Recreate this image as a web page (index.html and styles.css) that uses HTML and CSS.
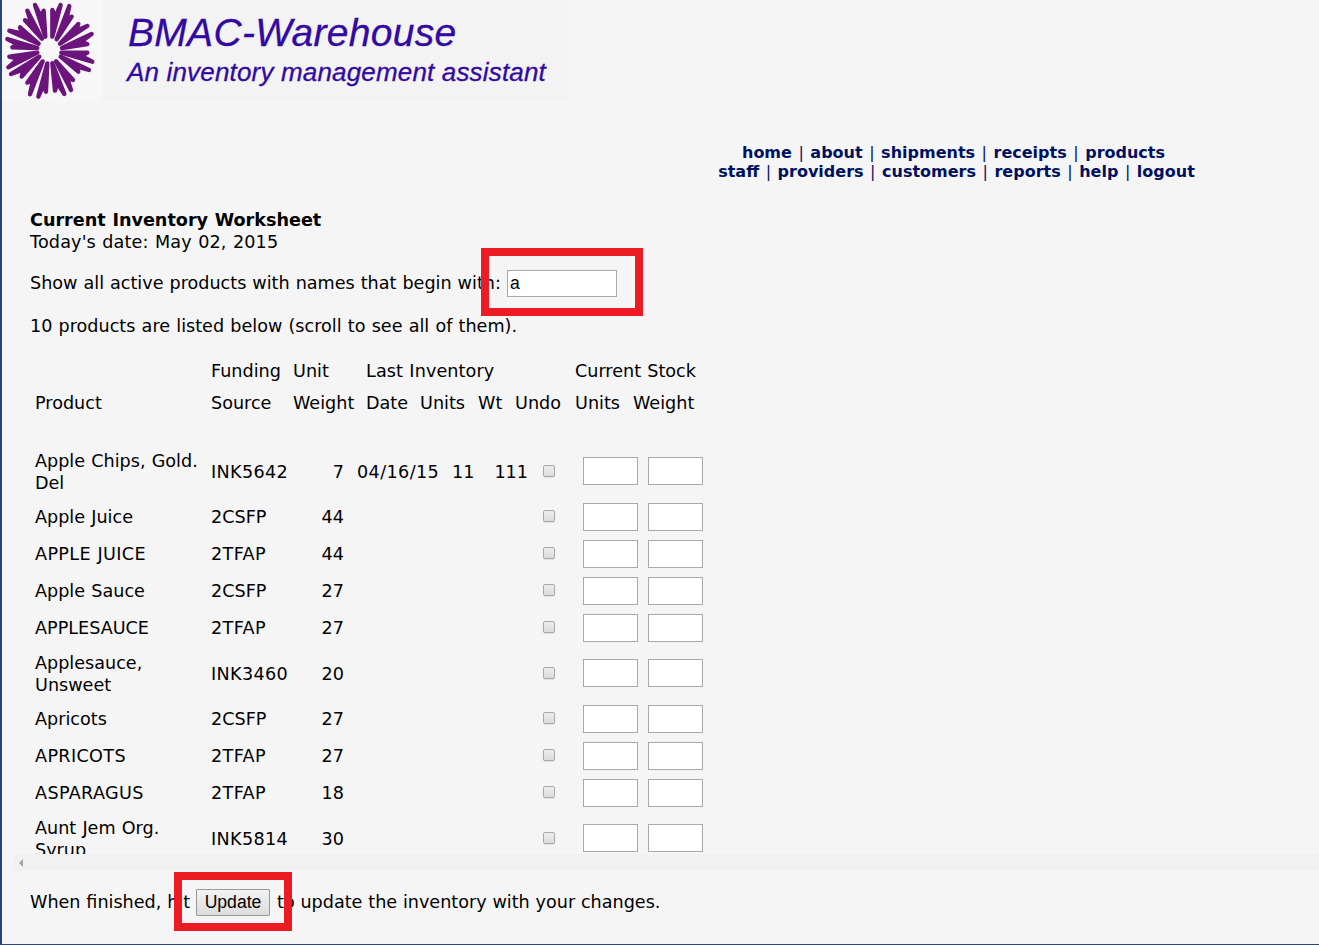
FILE: index.html
```
<!DOCTYPE html>
<html lang="en"><head><meta charset="utf-8"><title>BMAC-Warehouse</title><link rel="stylesheet" href="styles.css"></head>
<body>
<main class="page">
<header class="banner">
<svg class="logo" width="100" height="101" viewBox="0 0 300 303"><rect width="300" height="303" fill="#f7f7f7"/><g id="spokes" fill="#6b147b" stroke="#6b147b" stroke-width="13" stroke-linejoin="round">
</g></svg>
<div class="brand"><h1 class="brand-name">BMAC-Warehouse</h1><p class="tagline">An inventory management assistant</p></div>
</header>
<nav class="nav"><div class="nav-row nav-top"><a>home</a> | <a>about</a> | <a>shipments</a> | <a>receipts</a> | <a>products</a></div><div class="nav-row nav-bottom"><a>staff</a> | <a>providers</a> | <a>customers</a> | <a>reports</a> | <a>help</a> | <a>logout</a></div></nav>
<section class="intro"><h2 class="title">Current Inventory Worksheet</h2><p class="date">Today's date: May 02, 2015</p>
<div class="filter"><label class="filter-label" for="prefix">Show all active products with names that begin with:</label><span class="marked"><input id="prefix" class="prefix" value="a"><span class="mark mark-filter"></span></span></div>
<p class="count">10 products are listed below (scroll to see all of them).</p></section>
<div class="sheet">
<div class="head"><span></span><span>Funding</span><span>Unit</span><span class="last">Last Inventory</span><span class="stock">Current Stock</span></div>
<div class="head"><span>Product</span><span>Source</span><span>Weight</span><span>Date</span><span>Units</span><span>Wt</span><span>Undo</span><span>Units</span><span>Weight</span></div>
<div class="rows" id="rows"></div>
</div>
<div class="scrollbar"><span class="arrow"></span></div>
<footer class="finish"><span class="finish-a">When finished, hit</span><span class="marked"><button class="update">Update</button><span class="mark mark-update"></span></span><span class="finish-b">to update the inventory with your changes.</span></footer>
</main>
<script src="app.js"></script>
</body></html>
```

FILE: app.js
```
const products = [
  ["Apple Chips, Gold. Del", "INK5642", "7", "04/16/15", "11", "111"],
  ["Apple Juice", "2CSFP", "44"], ["APPLE JUICE", "2TFAP", "44"],
  ["Apple Sauce", "2CSFP", "27"], ["APPLESAUCE", "2TFAP", "27"],
  ["Applesauce, Unsweet", "INK3460", "20"], ["Apricots", "2CSFP", "27"],
  ["APRICOTS", "2TFAP", "27"], ["ASPARAGUS", "2TFAP", "18"],
  ["Aunt Jem Org. Syrup", "INK5814", "30"]
];
const twoLine = new Set([0, 5, 9]);
const spaced = new Set(["APPLE JUICE", "APRICOTS", "ASPARAGUS"]);
document.getElementById("rows").innerHTML = products.map((p, i) =>
  `<div class="row${twoLine.has(i) ? " tall" : ""}"><span class="name${spaced.has(p[0]) ? " caps" : ""}">${p[0]}</span><span class="${p[1] === "2CSFP" ? "" : "code"}">${p[1]}</span><span class="num">${p[2]}</span><span class="day">${p[3] || ""}</span><span>${p[4] || ""}</span><span class="num">${p[5] || ""}</span><input type="checkbox" class="undo"><input class="qty"><input class="qty"></div>`).join("");

// Each wedge: two outer tips and the inner point they share
const wedges = [
  [[131,32],[105,15],[136,110]], [[82,32],[75,61],[126,116]],
  [[60,82],[28,92],[116,131]], [[22,117],[37,142],[112,144]],
  [[28,170],[25,202],[112,158]], [[33,222],[65,230],[118,170]],
  [[82,248],[90,283],[128,184]], [[115,290],[138,275],[142,190]],
  [[165,272],[193,282],[157,190]], [[213,270],[219,240],[168,184]],
  [[235,215],[267,210],[182,170]], [[277,185],[262,158],[184,158]],
  [[262,132],[275,102],[186,144]], [[262,78],[235,72],[180,131]],
  [[215,50],[208,18],[170,118]], [[182,15],[157,30],[157,110]]
];
document.getElementById("spokes").innerHTML = wedges.map(([a, b, c]) => {
  const notch = [0, 1].map(k => (a[k] + b[k]) / 2 * 0.68 + c[k] * 0.32);
  return `<path d="M${[a, notch, b, c].map(([x, y]) => `${x - 6} ${y}`).join("L")}Z"/>`;
}).join("");
```

FILE: styles.css
```
* { box-sizing: border-box; }
body { margin: 0; background: #f5f5f5; color: #000; font: 17.6px/22px "DejaVu Sans", Verdana, sans-serif; word-spacing: .6px; }
h1, h2, p { margin: 0; }
.page { height: 945px; overflow: hidden; border-left: 2px solid #27457c; border-bottom: 1px solid #27457c; display: flex; flex-direction: column; }
.banner { display: flex; height: 101px; width: 566px; background: #f3f3f3; flex: none; }
.logo { flex: none; }
.brand { padding: 10px 0 0 25px; color: #3209a2; font-family: "Liberation Sans", Arial, sans-serif; font-style: italic; white-space: nowrap; word-spacing: 0; -webkit-text-stroke: .3px #3209a2; }
.brand-name { font-size: 39px; line-height: 45px; font-weight: 400; letter-spacing: .3px; padding-left: 1px; }
.tagline { font-size: 26px; line-height: 34px; letter-spacing: .17px; }
.nav { margin: 42px 0 0 590px; width: 730px; height: 38px; flex: none; font-size: 16px; line-height: 19px; color: #001060; text-align: center; white-space: nowrap; word-spacing: 1.45px; }
.nav a { font-weight: 700; }
.nav-top { padding-right: 7px; }
.nav-bottom { padding-right: 1px; }
.intro { padding: 28px 0 0 28px; flex: none; white-space: nowrap; }
.title { font-size: 17.6px; font-weight: 700; }
.date { letter-spacing: .15px; }
.filter { display: flex; align-items: center; height: 28px; margin-top: 16px; gap: 6px; }
.filter-label { width: 471px; word-spacing: .4px; }
.marked { position: relative; display: flex; }
.prefix { width: 110px; height: 27px; border: 1px solid #a9a9a9; background: #fff; padding: 1px 2px; font: 17.6px "Liberation Sans", Arial, sans-serif; }
.mark { position: absolute; border: 8px solid #ed1c24; pointer-events: none; }
.mark-filter { left: -26px; top: -22px; width: 162px; height: 68px; }
.mark-update { left: -22px; top: -17px; width: 118px; height: 59px; }
.count { margin-top: 18px; }
.sheet { height: 499px; margin-top: 18px; padding-left: 33px; overflow: hidden; flex: none; }
.head { display: grid; grid-template-columns: 176px 82px 73px 54px 58px 37px 60px 58px 70px; height: 32px; align-items: center; white-space: nowrap; }
.last { grid-column: 4 / 8; letter-spacing: .1px; }
.stock { grid-column: 8 / 10; }
.rows { padding-top: 25px; }
.row { display: grid; grid-template-columns: 176px 82px 51px 108px 34px 42px 55px 65px 55px; height: 37px; align-items: center; }
.tall { height: 54px; }
.tall span { padding-top: 2px; }
.tall .name { padding-top: 2px; }
.name { width: 166px; }
.caps { letter-spacing: .35px; }
.code { letter-spacing: .35px; }
.num { text-align: right; }
.day { padding-left: 13px; letter-spacing: .4px; }
.undo { appearance: none; width: 12px; height: 12px; margin: 0 0 1px 15px; border: 1px solid #a9a9a9; border-radius: 2px; background: linear-gradient(#ededed, #dcdcdc); box-shadow: 0 1px 1px #e0e0e0; }
.tall .undo { margin-bottom: 0; }
.qty { width: 55px; height: 28px; border: 1px solid #a9a9a9; background: #fff; padding: 1px 2px; }
.scrollbar { height: 17px; margin-left: 11px; background: #f1f1f1; display: flex; align-items: center; padding-left: 6px; flex: none; }
.arrow { border: 4px solid transparent; border-right-color: #a3a3a3; border-left: 0; }
.finish { display: flex; align-items: center; padding-left: 28px; margin-top: 17px; height: 28px; white-space: nowrap; flex: none; word-spacing: .2px; }
.finish-a { width: 166px; }
.finish-b { padding-left: 7px; }
.update { width: 74px; height: 27px; border: 1px solid #999; border-radius: 1px; background: linear-gradient(#f3f3f3, #dcdcdc); padding: 0; color: #000; font: 17.6px "Liberation Sans", Arial, sans-serif; }
```
